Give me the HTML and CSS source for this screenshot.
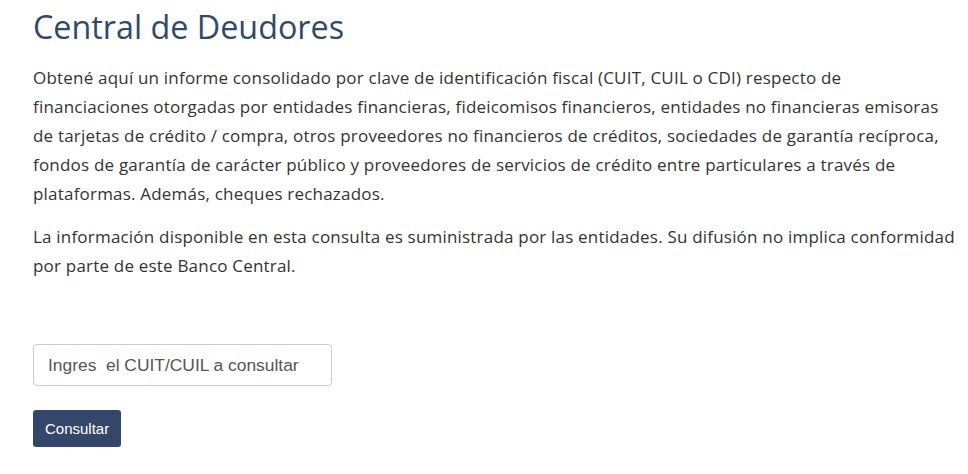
FILE: index.html
```
<!DOCTYPE html>
<html lang="es">
<head>
<meta charset="utf-8">
<link rel="stylesheet" href="styles.css">
</head>
<body>
<main class="page">
  <h1 class="title">Central de Deudores</h1>
  <p class="text">Obtené aquí un informe consolidado por clave de identificación fiscal (CUIT, CUIL o CDI) respecto de<br>financiaciones otorgadas por entidades financieras, fideicomisos financieros, entidades no financieras emisoras<br>de tarjetas de crédito / compra, otros proveedores no financieros de créditos, sociedades de garantía recíproca,<br>fondos de garantía de carácter público y proveedores de servicios de crédito entre particulares a través de<br>plataformas. Además, cheques rechazados.</p>
  <p class="text">La información disponible en esta consulta es suministrada por las entidades. Su difusión no implica conformidad<br>por parte de este Banco Central.</p>
  <form class="form">
    <input class="field" type="text" placeholder="Ingres  el CUIT/CUIL a consultar">
    <button class="btn" type="button">Consultar</button>
  </form>
</main>
</body>
</html>
```
FILE: styles.css
```
html, body { margin: 0; padding: 0; background: #fff; }
.page {
  padding: 0 0 0 33px;
  font-family: "Open Sans", Lato, sans-serif;
  color: #333;
}
.title {
  margin: 0;
  padding-top: 6px;
  font-size: 32.3px;
  font-weight: 400;
  line-height: 40px;
  color: #2f4a6c;
  white-space: nowrap;
}
.text {
  margin: 17px 0 0;
  font-size: 17px;
  letter-spacing: 0.2px;
  line-height: 29px;
  white-space: nowrap;
}
.text + .text { margin-top: 14px; }
.form {
  margin-top: 64px;
  display: flex;
  flex-direction: column;
  align-items: flex-start;
  gap: 24px;
}
.field {
  box-sizing: border-box;
  width: 299px;
  height: 42px;
  padding: 0 14px;
  border: 1px solid #ccc;
  border-radius: 4px;
  font-family: "Liberation Sans", Arial, sans-serif;
  font-size: 17.4px;
  color: #555;
}
.field::placeholder { color: #555; opacity: 1; }
.btn {
  box-sizing: border-box;
  height: 37px;
  padding: 0 12px;
  border: 0;
  border-radius: 3px;
  background: #34476a;
  color: #fff;
  font-family: "Liberation Sans", Arial, sans-serif;
  font-size: 15px;
}
```
